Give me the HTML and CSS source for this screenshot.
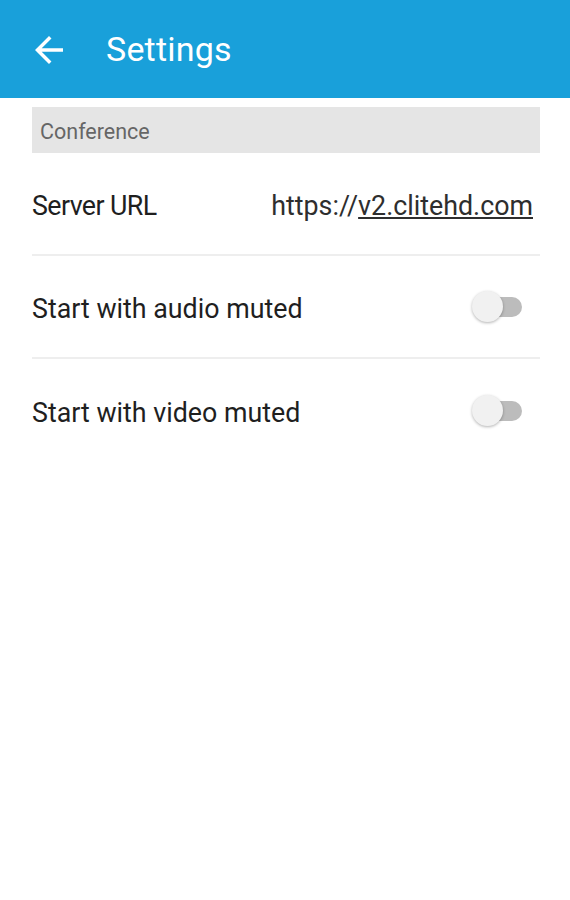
FILE: index.html
```html
<!DOCTYPE html>
<html>
<head>
<meta charset="utf-8">
<link rel="stylesheet" href="styles.css">
</head>
<body>
<header class="appbar">
  <svg class="back" viewBox="4 4 16 16" width="28" height="28"><path d="M20 11H7.83l5.59-5.59L12 4l-8 8 8 8 1.41-1.41L7.83 13H20v-2z" fill="#fff"/></svg>
  <h1 class="title">Settings</h1>
</header>
<main class="content">
  <div class="section">Conference</div>
  <div class="row">
    <span class="label tight">Server URL</span>
    <span class="value">https://<u>v2.clitehd.com</u></span>
  </div>
  <div class="row">
    <span class="label">Start with audio muted</span>
    <span class="switch"><span class="track"></span><span class="thumb"></span></span>
  </div>
  <div class="row last">
    <span class="label">Start with video muted</span>
    <span class="switch"><span class="track"></span><span class="thumb"></span></span>
  </div>
</main>
</body>
</html>
```
FILE: styles.css
```css
* { box-sizing: border-box; }
html, body { margin: 0; padding: 0; background: #fff; }
body { font-family: Roboto, "Noto Sans", sans-serif; width: 570px; height: 900px; }
.appbar {
  height: 98px;
  background: #19a0da;
  display: flex;
  align-items: center;
  padding-left: 35px;
}
.back { display: block; margin-top: 2px; }
.title {
  margin: 0 0 0 43px;
  color: #fff;
  font-weight: 400;
  font-size: 34px;
  letter-spacing: 0.2px;
}
.content { padding: 9px 30px 0 32px; }
.section {
  height: 46px;
  background: #e5e5e5;
  color: #666;
  font-size: 21.5px;
  display: flex;
  align-items: center;
  padding-left: 8px;
  padding-top: 2px;
}
.row {
  height: 103px;
  display: flex;
  align-items: center;
  justify-content: space-between;
  border-bottom: 2px solid #eeeeee;
  padding-top: 5px;
}
.row.last { border-bottom: none; }
.label { font-size: 26.8px; color: #1f1f1f; }
.label.tight { letter-spacing: -0.6px; }
.value { font-size: 26.8px; color: #2e2e2e; margin-right: 7px; }
.value u { text-decoration-thickness: 1.5px; text-underline-offset: 2px; }
.switch {
  position: relative;
  width: 50px;
  height: 32px;
  margin-right: 18px;
  display: block;
  margin-top: -5px;
}
.track {
  position: absolute;
  left: 10px;
  top: 6px;
  width: 40px;
  height: 20px;
  border-radius: 10px;
  background: #bcbcbc;
}
.thumb {
  position: absolute;
  left: 0;
  top: 0;
  width: 31px;
  height: 31px;
  border-radius: 50%;
  background: #f1f1f1;
  box-shadow: 0 1px 3px rgba(0,0,0,0.3);
}
```
